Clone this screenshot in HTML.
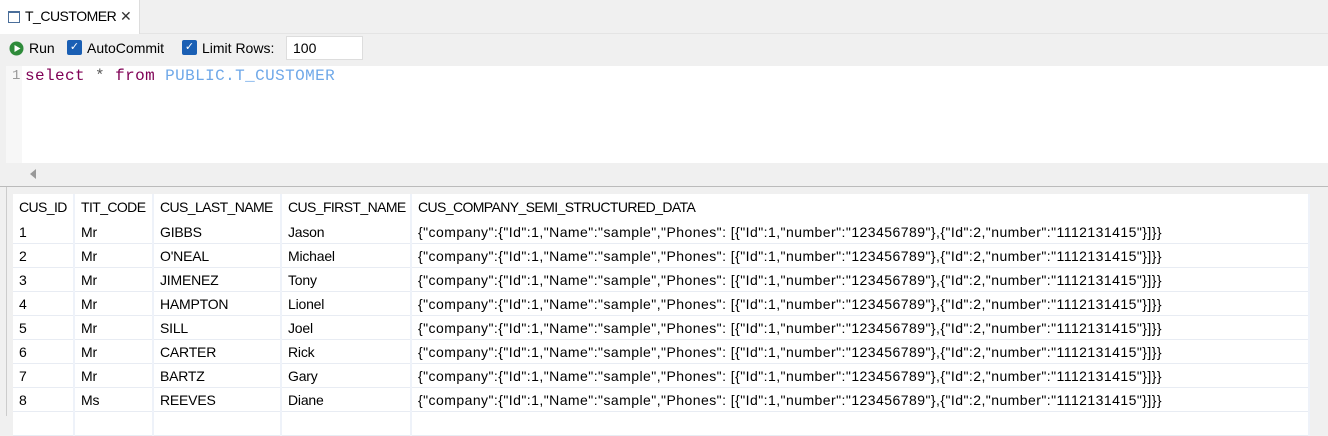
<!DOCTYPE html>
<html><head><style>
body{margin:0;width:1328px;height:416px;overflow:hidden;background:#f0f0f0;font-family:"Liberation Sans",sans-serif;font-size:14px;color:#000;position:relative}
.abs{position:absolute}
table{border-collapse:collapse;position:absolute;left:13px;top:194px;background:#fff;table-layout:fixed}
td{height:23px;padding:0 0 0 6px;border-right:2px solid #eef2f9;border-bottom:1px solid #e8ecf3;white-space:nowrap;font-size:14px;letter-spacing:-0.2px;overflow:hidden}
tr.h td{height:26px;border-bottom:none;letter-spacing:-0.6px}
td.j{letter-spacing:0.45px}
</style></head><body>
<div class="abs" style="left:0;top:0;width:1328px;height:33px;background:#f0f0f0;border-bottom:1px solid #e4e4e4"></div>
<div class="abs" style="left:0;top:0;width:139px;height:34px;background:#fff;border-right:1px solid #ddd"></div>
<div class="abs" style="left:8px;top:11px;width:10px;height:9px;border:1px solid #4a6e9a;border-top-width:2px"></div>
<div class="abs" style="left:25px;top:8px;font-size:14px;letter-spacing:-0.5px">T_CUSTOMER</div>
<div class="abs" style="left:120px;top:8px;font-size:14px;color:#333">✕</div>
<svg class="abs" style="left:9px;top:41px" width="15" height="15"><circle cx="7.5" cy="7.5" r="7" fill="#2e8b3a"/><path d="M5.5 4v7l6-3.5z" fill="#fff"/></svg>
<div class="abs" style="left:29px;top:40px">Run</div>
<div class="abs" style="left:67px;top:40px;width:15px;height:15px;background:#1a5fb4;border-radius:2px;color:#fff;font-size:11px;text-align:center;line-height:15px">✓</div>
<div class="abs" style="left:87px;top:40px">AutoCommit</div>
<div class="abs" style="left:182px;top:40px;width:15px;height:15px;background:#1a5fb4;border-radius:2px;color:#fff;font-size:11px;text-align:center;line-height:15px">✓</div>
<div class="abs" style="left:202px;top:40px">Limit Rows:</div>
<div class="abs" style="left:286px;top:36px;width:77px;height:24px;background:#fff;border:1px solid #ddd;box-sizing:border-box;padding:3px 6px">100</div>
<div class="abs" style="left:6px;top:66px;width:1322px;height:97px;background:#fff"></div>
<div class="abs" style="left:6px;top:66px;width:16px;height:97px;background:#f7f7f7"></div>
<div class="abs" style="left:12px;top:68px;font-family:'Liberation Mono',monospace;font-size:14px;color:#999">1</div>
<div class="abs" style="left:25px;top:67px;font-family:'Liberation Mono',monospace;font-size:16px;letter-spacing:0.4px;white-space:pre"><span style="color:#7f0055">select</span> <span style="color:#555">*</span> <span style="color:#7f0055">from</span> <span style="color:#6fa8e8">PUBLIC.T_CUSTOMER</span></div>
<div class="abs" style="left:6px;top:163px;width:1322px;height:21px;background:#f0f0f0"></div>
<div class="abs" style="left:30px;top:169px;width:0;height:0;border-top:5px solid transparent;border-bottom:5px solid transparent;border-right:6px solid #999"></div>
<div class="abs" style="left:0;top:186px;width:1328px;height:1px;background:#bbb"></div>
<div class="abs" style="left:6px;top:187px;width:1px;height:229px;background:#ccc"></div>
<div class="abs" style="left:13px;top:194px;width:1297px;height:222px;background:#fff"></div>
<table>
<colgroup><col style="width:61px"><col style="width:79px"><col style="width:128px"><col style="width:130px"><col style="width:898px"></colgroup>
<tr class="h"><td>CUS_ID</td><td>TIT_CODE</td><td>CUS_LAST_NAME</td><td>CUS_FIRST_NAME</td><td>CUS_COMPANY_SEMI_STRUCTURED_DATA</td></tr>
<tr><td>1</td><td>Mr</td><td>GIBBS</td><td>Jason</td><td class="j">{"company":{"Id":1,"Name":"sample","Phones": [{"Id":1,"number":"123456789"},{"Id":2,"number":"1112131415"}]}}</td></tr>
<tr><td>2</td><td>Mr</td><td>O'NEAL</td><td>Michael</td><td class="j">{"company":{"Id":1,"Name":"sample","Phones": [{"Id":1,"number":"123456789"},{"Id":2,"number":"1112131415"}]}}</td></tr>
<tr><td>3</td><td>Mr</td><td>JIMENEZ</td><td>Tony</td><td class="j">{"company":{"Id":1,"Name":"sample","Phones": [{"Id":1,"number":"123456789"},{"Id":2,"number":"1112131415"}]}}</td></tr>
<tr><td>4</td><td>Mr</td><td>HAMPTON</td><td>Lionel</td><td class="j">{"company":{"Id":1,"Name":"sample","Phones": [{"Id":1,"number":"123456789"},{"Id":2,"number":"1112131415"}]}}</td></tr>
<tr><td>5</td><td>Mr</td><td>SILL</td><td>Joel</td><td class="j">{"company":{"Id":1,"Name":"sample","Phones": [{"Id":1,"number":"123456789"},{"Id":2,"number":"1112131415"}]}}</td></tr>
<tr><td>6</td><td>Mr</td><td>CARTER</td><td>Rick</td><td class="j">{"company":{"Id":1,"Name":"sample","Phones": [{"Id":1,"number":"123456789"},{"Id":2,"number":"1112131415"}]}}</td></tr>
<tr><td>7</td><td>Mr</td><td>BARTZ</td><td>Gary</td><td class="j">{"company":{"Id":1,"Name":"sample","Phones": [{"Id":1,"number":"123456789"},{"Id":2,"number":"1112131415"}]}}</td></tr>
<tr><td>8</td><td>Ms</td><td>REEVES</td><td>Diane</td><td class="j">{"company":{"Id":1,"Name":"sample","Phones": [{"Id":1,"number":"123456789"},{"Id":2,"number":"1112131415"}]}}</td></tr>
<tr><td></td><td></td><td></td><td></td><td></td></tr>
</table>
</body></html>
